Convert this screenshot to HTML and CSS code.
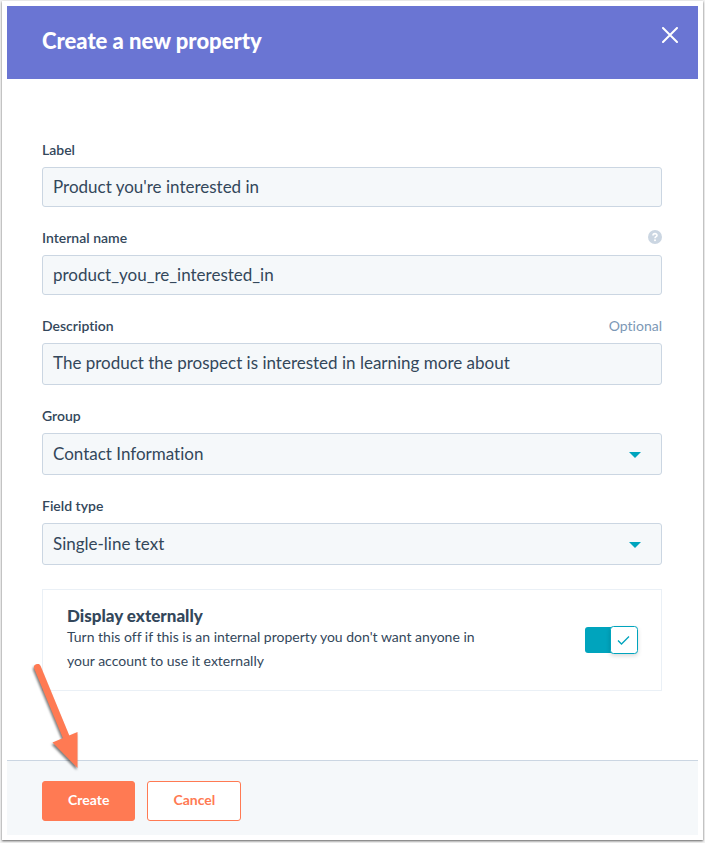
FILE: index.html
```
<!DOCTYPE html>
<html lang="en">
<head>
    <meta charset="UTF-8">
    <meta name="viewport" content="width=device-width, initial-scale=1.0">
    <title>Create a new property</title>
    <link rel="stylesheet" href="styles.css">
</head>
<body>
    <div class="panel">
        <header class="panel-header">
            <h2>Create a new property</h2>
            <button type="button" class="close" aria-label="Close">
                <svg width="16" height="16" viewBox="0 0 16 16"><path d="M1 1L15 15M15 1L1 15" fill="none" stroke="#fff" stroke-width="2" stroke-linecap="round"/></svg>
            </button>
        </header>
        <form id="property-form" class="panel-body">
            <div class="field">
                <div class="field-head">
                    <label for="label">Label</label>
                </div>
                <input type="text" id="label" name="label" value="Product you're interested in">
            </div>
            <div class="field">
                <div class="field-head">
                    <label for="name">Internal name</label>
                    <svg class="help" width="14" height="14" viewBox="0 0 14 14">
                        <circle cx="7" cy="7" r="7" fill="#cbd6e2"/>
                        <path d="M5 5.5C5 3 9 3 9 5.4C9 6.8 7 6.6 7 8.2" fill="none" stroke="#fff" stroke-width="1.6"/>
                        <circle cx="7" cy="10.2" r="1" fill="#fff"/>
                    </svg>
                </div>
                <input type="text" id="name" name="name" value="product_you_re_interested_in">
            </div>
            <div class="field">
                <div class="field-head">
                    <label for="description">Description</label>
                    <span class="optional">Optional</span>
                </div>
                <textarea id="description" name="description" rows="1">The product the prospect is interested in learning more about</textarea>
            </div>
            <div class="field">
                <div class="field-head">
                    <label for="group">Group</label>
                </div>
                <div class="select">
                    <select id="group" name="group">
                        <option>Contact Information</option>
                    </select>
                </div>
            </div>
            <div class="field">
                <div class="field-head">
                    <label for="type">Field type</label>
                </div>
                <div class="select">
                    <select id="type" name="type">
                        <option>Single-line text</option>
                    </select>
                </div>
            </div>
            <div class="external">
                <div class="external-text">
                    <label for="external">Display externally</label>
                    <p>Turn this off if this is an internal property you don't want anyone in your account to use it externally</p>
                </div>
                <div class="toggle">
                    <input type="checkbox" id="external" name="external" checked>
                    <svg class="knob" width="28" height="28" viewBox="0 0 28 28">
                        <rect x=".5" y=".5" width="27" height="27" rx="3" fill="#fff" stroke="#00a4bd"/>
                        <path d="M8 14.5L11.5 18L19 10.5" fill="none" stroke="#00a4bd" stroke-width="1.3"/>
                    </svg>
                </div>
            </div>
        </form>
        <footer class="panel-footer">
            <button type="submit" form="property-form" class="btn primary">Create</button>
            <button type="button" class="btn">Cancel</button>
            <svg class="pointer" width="56" height="116" viewBox="0 0 56 116">
                <path d="M7.500 8.500L37 80" stroke="#ff7a53" stroke-width="7" stroke-linecap="round"/>
                <path d="M22.500 83.500L47.500 73L47.500 109Z" fill="#ff7a53"/>
            </svg>
        </footer>
    </div>
</body>
</html>
```

FILE: styles.css
```
* {
    box-sizing: border-box;
}
body {
    margin: 0;
    padding: 1px 2px 3px;
    background-color: #f2f2f2;
    color: #33475b;
    font-family: Lato, "Liberation Sans", sans-serif;
    font-size: 14px;
    font-variant-ligatures: none;
    line-height: 24px;
}
.panel {
    padding: 5px;
    background-color: #fff;
    box-shadow: 0 1px 2px rgba(0, 0, 0, 0.6);
}
.panel-header {
    display: flex;
    justify-content: space-between;
    align-items: flex-start;
    padding: 20px 20px 23px 35px;
    background-color: #6a75d3;
}
.panel-header h2 {
    margin: 0;
    color: #fff;
    font-size: 22px;
    font-weight: 900;
    line-height: 30px;
}
.close {
    display: flex;
    padding: 1px 0;
    background: none;
    border: none;
    cursor: pointer;
}
.panel-body {
    padding: 59px 36px 69px 35px;
}
.field {
    margin-bottom: 19px;
}
.field-head {
    display: flex;
    justify-content: space-between;
    margin-bottom: 5px;
}
.field-head label {
    font-weight: 600;
}
.optional {
    color: #7c98b6;
}
.help {
    margin-top: 4px;
}
.field input, .field textarea, .field select {
    display: block;
    width: 100%;
    height: 40px;
    margin: 0;
    padding: 0 10px 1px;
    background-color: #f5f8fa;
    border: 1px solid #cbd6e2;
    border-radius: 3px;
    color: #33475b;
    font-family: inherit;
    font-size: 17px;
    font-variant-ligatures: none;
    line-height: 24px;
}
.field textarea {
    height: 42px;
    padding: 7px 10px;
    resize: none;
    overflow: hidden;
}
.field select {
    height: 42px;
    appearance: none;
}
.select {
    position: relative;
}
.select::after {
    content: "";
    position: absolute;
    top: 19px;
    right: 21px;
    border: 6px solid transparent;
    border-top-color: #00a4bd;
    border-bottom: none;
    pointer-events: none;
}
.external {
    display: flex;
    justify-content: space-between;
    align-items: center;
    margin-top: 24px;
    padding: 17px 24px;
    border: 1px solid #eaf0f6;
}
.external-text {
    max-width: 430px;
}
.external-text label {
    display: block;
    font-size: 17px;
    font-weight: 900;
    line-height: 18px;
}
.external-text p {
    margin: 0;
}
.toggle {
    position: relative;
    display: flex;
}
.toggle input {
    width: 52px;
    height: 26px;
    margin: 0;
    appearance: none;
    background-color: #00a4bd;
    border-radius: 3px;
}
.knob {
    position: absolute;
    top: -1px;
    right: -1px;
    filter: drop-shadow(0 2px 2px rgba(0, 0, 0, 0.15));
    pointer-events: none;
}
.panel-footer {
    position: relative;
    display: flex;
    gap: 12px;
    padding: 20px 35px 14px;
    background-color: #f5f8fa;
    border-top: 1px solid #cbd6e2;
}
.btn {
    height: 40px;
    padding: 0 25px 3px;
    background-color: #fff;
    border: 1px solid #ff7a53;
    border-radius: 3px;
    color: #ff7a53;
    font-family: inherit;
    font-size: 14px;
    font-weight: bold;
    cursor: pointer;
}
.btn.primary {
    background-color: #ff7a53;
    color: #fff;
}
.pointer {
    position: absolute;
    top: -102px;
    left: 23px;
    filter: drop-shadow(-1px 2px 1px rgba(0, 0, 0, 0.5));
    pointer-events: none;
}
```
